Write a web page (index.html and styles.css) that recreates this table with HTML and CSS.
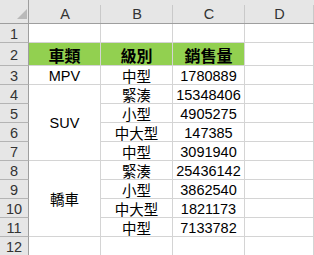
FILE: index.html
```html
<!DOCTYPE html>
<html lang="zh-Hant">
<head>
<meta charset="utf-8">
<title>Sheet</title>
<link rel="stylesheet" href="styles.css">
</head>
<body>
<div class="sheet">
  <div class="corner"><svg class="tri" width="10" height="10" viewBox="0 0 10 10"><polygon points="10,0 10,10 0,10" fill="#b9b9b9"/></svg></div>
  <div class="colhead">A</div>
  <div class="colhead">B</div>
  <div class="colhead">C</div>
  <div class="colhead last">D</div>

  <div class="rowhead">1</div>
  <div class="cell"></div><div class="cell"></div><div class="cell"></div><div class="cell"></div>

  <div class="rowhead">2</div>
  <div class="cell title">車類</div><div class="cell title">級別</div><div class="cell title">銷售量</div><div class="cell"></div>

  <div class="rowhead">3</div>
  <div class="cell">MPV</div><div class="cell">中型</div><div class="cell">1780889</div><div class="cell"></div>

  <div class="rowhead">4</div>
  <div class="cell merged">SUV</div><div class="cell">緊湊</div><div class="cell">15348406</div><div class="cell"></div>
  <div class="rowhead">5</div>
  <div class="cell">小型</div><div class="cell">4905275</div><div class="cell"></div>
  <div class="rowhead">6</div>
  <div class="cell">中大型</div><div class="cell">147385</div><div class="cell"></div>
  <div class="rowhead">7</div>
  <div class="cell">中型</div><div class="cell">3091940</div><div class="cell"></div>

  <div class="rowhead">8</div>
  <div class="cell merged">轎車</div><div class="cell">緊湊</div><div class="cell">25436142</div><div class="cell"></div>
  <div class="rowhead">9</div>
  <div class="cell">小型</div><div class="cell">3862540</div><div class="cell"></div>
  <div class="rowhead">10</div>
  <div class="cell">中大型</div><div class="cell">1821173</div><div class="cell"></div>
  <div class="rowhead">11</div>
  <div class="cell">中型</div><div class="cell">7133782</div><div class="cell"></div>

  <div class="rowhead">12</div>
  <div class="cell"></div><div class="cell"></div><div class="cell"></div><div class="cell"></div>
</div>
</body>
</html>
```
FILE: styles.css
```css
html, body {
  margin: 0;
  padding: 0;
  background: #ffffff;
  overflow: hidden;
}

.sheet {
  display: grid;
  grid-template-columns: 29px 72px 72px 72px 1fr;
  grid-template-rows: 24px 19px 23px repeat(10, 19px);
  width: 314px;
  height: 255px;
  overflow: hidden;
  font-family: "Liberation Sans", "Noto Sans CJK TC", sans-serif;
  font-size: 14.5px;
  color: #000;
}

.sheet > div {
  box-sizing: border-box;
  display: flex;
  align-items: center;
  justify-content: center;
  min-width: 0;
  overflow: hidden;
  white-space: nowrap;
}

.corner {
  background: #e6e6e6;
  border-right: 1px solid #9e9e9e;
  border-bottom: 1px solid #9e9e9e;
  align-items: flex-end !important;
  justify-content: flex-end !important;
  padding: 0 1px 4px 0;
}

.tri {
  display: block;
}

.colhead {
  background: linear-gradient(#c9c9c9, #c9c9c9) right bottom / 1px 18px no-repeat, #e6e6e6;
  border-bottom: 1px solid #9e9e9e;
  color: #333;
  padding-top: 5px;
}

.rowhead {
  background: #e6e6e6;
  border-right: 1px solid #9e9e9e;
  border-bottom: 1px solid #b4b4b4;
  color: #333;
  padding-top: 1px;
}

.cell {
  border-right: 1px solid #d4d4d4;
  border-bottom: 1px solid #d4d4d4;
  padding-top: 1px;
}

.title {
  background: #92d050;
  font-size: 16px;
  font-weight: 700;
  padding-top: 2px;
}

.merged {
  grid-row: span 4;
  padding-top: 0;
}
```
